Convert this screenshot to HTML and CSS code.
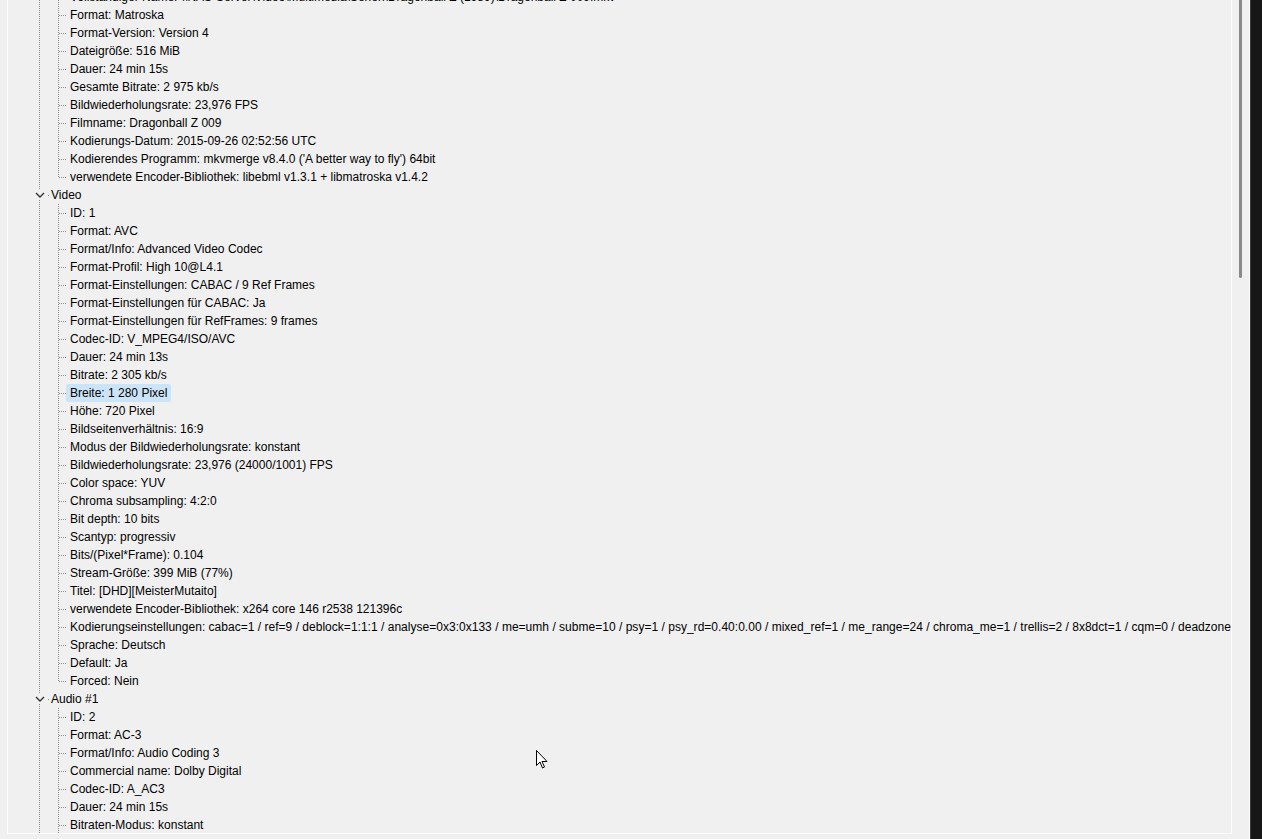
FILE: index.html
```html
<!DOCTYPE html>
<html lang="de">
<head>
<meta charset="utf-8">
<title>MediaInfo</title>
<link rel="stylesheet" href="styles.css">
</head>
<body>
<div class="window">
  <div class="panel">
    <div class="tree">
      <div class="kids">
        <div class="row leaf"><span class="conn"></span><span class="label">Vollständiger Name: \\NAS-Server\Video\Multimedia\Serien\Dragonball Z (1989)\Dragonball Z 009.mkv</span></div>
        <div class="row leaf"><span class="conn"></span><span class="label">Format: Matroska</span></div>
        <div class="row leaf"><span class="conn"></span><span class="label">Format-Version: Version 4</span></div>
        <div class="row leaf"><span class="conn"></span><span class="label">Dateigröße: 516 MiB</span></div>
        <div class="row leaf"><span class="conn"></span><span class="label">Dauer: 24 min 15s</span></div>
        <div class="row leaf"><span class="conn"></span><span class="label">Gesamte Bitrate: 2 975 kb/s</span></div>
        <div class="row leaf"><span class="conn"></span><span class="label">Bildwiederholungsrate: 23,976 FPS</span></div>
        <div class="row leaf"><span class="conn"></span><span class="label">Filmname: Dragonball Z 009</span></div>
        <div class="row leaf"><span class="conn"></span><span class="label">Kodierungs-Datum: 2015-09-26 02:52:56 UTC</span></div>
        <div class="row leaf"><span class="conn"></span><span class="label">Kodierendes Programm: mkvmerge v8.4.0 ('A better way to fly') 64bit</span></div>
        <div class="row leaf last"><span class="conn"></span><span class="label">verwendete Encoder-Bibliothek: libebml v1.3.1 + libmatroska v1.4.2</span></div>
      </div>

      <div class="row head"><span class="chev"><svg width="10" height="6" viewBox="0 0 10 6"><polyline points="1,1 5,5 9,1" fill="none" stroke="#333" stroke-width="1.4"/></svg></span><span class="hdots"></span><span class="label">Video</span></div>
      <div class="kids">
        <div class="row leaf"><span class="conn"></span><span class="label">ID: 1</span></div>
        <div class="row leaf"><span class="conn"></span><span class="label">Format: AVC</span></div>
        <div class="row leaf"><span class="conn"></span><span class="label">Format/Info: Advanced Video Codec</span></div>
        <div class="row leaf"><span class="conn"></span><span class="label">Format-Profil: High 10@L4.1</span></div>
        <div class="row leaf"><span class="conn"></span><span class="label">Format-Einstellungen: CABAC / 9 Ref Frames</span></div>
        <div class="row leaf"><span class="conn"></span><span class="label">Format-Einstellungen für CABAC: Ja</span></div>
        <div class="row leaf"><span class="conn"></span><span class="label">Format-Einstellungen für RefFrames: 9 frames</span></div>
        <div class="row leaf"><span class="conn"></span><span class="label">Codec-ID: V_MPEG4/ISO/AVC</span></div>
        <div class="row leaf"><span class="conn"></span><span class="label">Dauer: 24 min 13s</span></div>
        <div class="row leaf"><span class="conn"></span><span class="label">Bitrate: 2 305 kb/s</span></div>
        <div class="row leaf"><span class="conn"></span><span class="label selected">Breite: 1 280 Pixel</span></div>
        <div class="row leaf"><span class="conn"></span><span class="label">Höhe: 720 Pixel</span></div>
        <div class="row leaf"><span class="conn"></span><span class="label">Bildseitenverhältnis: 16:9</span></div>
        <div class="row leaf"><span class="conn"></span><span class="label">Modus der Bildwiederholungsrate: konstant</span></div>
        <div class="row leaf"><span class="conn"></span><span class="label">Bildwiederholungsrate: 23,976 (24000/1001) FPS</span></div>
        <div class="row leaf"><span class="conn"></span><span class="label">Color space: YUV</span></div>
        <div class="row leaf"><span class="conn"></span><span class="label">Chroma subsampling: 4:2:0</span></div>
        <div class="row leaf"><span class="conn"></span><span class="label">Bit depth: 10 bits</span></div>
        <div class="row leaf"><span class="conn"></span><span class="label">Scantyp: progressiv</span></div>
        <div class="row leaf"><span class="conn"></span><span class="label">Bits/(Pixel*Frame): 0.104</span></div>
        <div class="row leaf"><span class="conn"></span><span class="label">Stream-Größe: 399 MiB (77%)</span></div>
        <div class="row leaf"><span class="conn"></span><span class="label">Titel: [DHD][MeisterMutaito]</span></div>
        <div class="row leaf"><span class="conn"></span><span class="label">verwendete Encoder-Bibliothek: x264 core 146 r2538 121396c</span></div>
        <div class="row leaf"><span class="conn"></span><span class="label wide">Kodierungseinstellungen: cabac=1 / ref=9 / deblock=1:1:1 / analyse=0x3:0x133 / me=umh / subme=10 / psy=1 / psy_rd=0.40:0.00 / mixed_ref=1 / me_range=24 / chroma_me=1 / trellis=2 / 8x8dct=1 / cqm=0 / deadzone=21,11 / fast_pskip=1 / chroma_qp_offset=-2 / threads=12 / lookahead_threads=2 / sliced_threads=0</span></div>
        <div class="row leaf"><span class="conn"></span><span class="label">Sprache: Deutsch</span></div>
        <div class="row leaf"><span class="conn"></span><span class="label">Default: Ja</span></div>
        <div class="row leaf last"><span class="conn"></span><span class="label">Forced: Nein</span></div>
      </div>

      <div class="row head"><span class="chev"><svg width="10" height="6" viewBox="0 0 10 6"><polyline points="1,1 5,5 9,1" fill="none" stroke="#333" stroke-width="1.4"/></svg></span><span class="hdots"></span><span class="label">Audio #1</span></div>
      <div class="kids">
        <div class="row leaf"><span class="conn"></span><span class="label">ID: 2</span></div>
        <div class="row leaf"><span class="conn"></span><span class="label">Format: AC-3</span></div>
        <div class="row leaf"><span class="conn"></span><span class="label">Format/Info: Audio Coding 3</span></div>
        <div class="row leaf"><span class="conn"></span><span class="label">Commercial name: Dolby Digital</span></div>
        <div class="row leaf"><span class="conn"></span><span class="label">Codec-ID: A_AC3</span></div>
        <div class="row leaf"><span class="conn"></span><span class="label">Dauer: 24 min 15s</span></div>
        <div class="row leaf"><span class="conn"></span><span class="label">Bitraten-Modus: konstant</span></div>
        <div class="row leaf"><span class="conn"></span><span class="label">Bitrate: 192 kb/s</span></div>
      </div>
    </div>
  </div>
  <div class="scrollbar"><div class="thumb"></div></div>
  <div class="edge"></div>
</div>
<svg class="cursor" width="12" height="20" viewBox="0 0 12 20"><path d="M0.5,0.5 L0.5,15.5 L4,12 L6.5,18 L8.5,17 L6,11.5 L11,11.5 Z" fill="#fff" stroke="#000" stroke-width="1" stroke-linejoin="miter"/></svg>
</body>
</html>
```

FILE: styles.css
```css
html, body {
  margin: 0;
  padding: 0;
  height: 100%;
  background: #f0f0f0;
  overflow: hidden;
}

body {
  font-family: "Liberation Sans", Arial, sans-serif;
  font-size: 12px;
  color: #000;
}

.window {
  display: flex;
  height: 839px;
  padding-left: 7px;
}

.panel {
  width: 1223px;
  height: 833px;
  border-left: 1px solid #fcfcfc;
  border-right: 1px solid #fcfcfc;
  border-bottom: 1px solid #fcfcfc;
  overflow: hidden;
  background: #f0f0f0;
}

.tree {
  margin-top: -12px;
  background-image: repeating-linear-gradient(to bottom, #8c8c8c 0 1px, transparent 1px 2px);
  background-size: 1px 100%;
  background-repeat: no-repeat;
  background-position: 31px 0;
}

.kids {
  display: flex;
  flex-direction: column;
}

.row {
  display: flex;
  align-items: stretch;
  height: 18px;
  white-space: nowrap;
}

.leaf {
  padding-left: 50px;
}

.conn {
  flex: none;
  width: 8px;
  background-image:
    repeating-linear-gradient(to bottom, #8c8c8c 0 1px, transparent 1px 2px),
    repeating-linear-gradient(to right, transparent 0 1px, #8c8c8c 1px 2px);
  background-size: 1px 100%, 100% 1px;
  background-repeat: no-repeat, no-repeat;
  background-position: 0 0, 0 9px;
}

.leaf.last .conn {
  background-size: 1px 10px, 100% 1px;
}

.label {
  padding: 1px 4px 0;
  line-height: 17px;
  border-radius: 2px;
}

.wide {
  letter-spacing: 0.02px;
}

.selected {
  background: #cce4f7;
}

.head {
  padding-left: 26px;
  align-items: center;
}

.chev {
  flex: none;
  width: 11px;
  height: 10px;
  display: flex;
  align-items: center;
  justify-content: center;
  background: #f0f0f0;
}

.chev svg {
  display: block;
}

.hdots {
  flex: none;
  width: 5px;
  height: 1px;
  background-image: repeating-linear-gradient(to right, transparent 0 1px, #8c8c8c 1px 2px);
  background-size: 100% 1px;
  background-repeat: no-repeat;
  background-position: 2px 0;
}

.head .label {
  padding-left: 1px;
}

.scrollbar {
  width: 17px;
  height: 839px;
  background: #f0f0f0;
  border-right: 1px solid #fafafa;
  display: flex;
  justify-content: center;
}

.thumb {
  width: 3px;
  height: 282px;
  margin-top: -4px;
  background: #8a8a8a;
  border-radius: 2px;
}

.edge {
  flex: 1;
  background: #171717;
  border-left: 1px solid #3a3a3a;
}

.cursor {
  position: absolute;
  left: 536px;
  top: 750px;
}
```
